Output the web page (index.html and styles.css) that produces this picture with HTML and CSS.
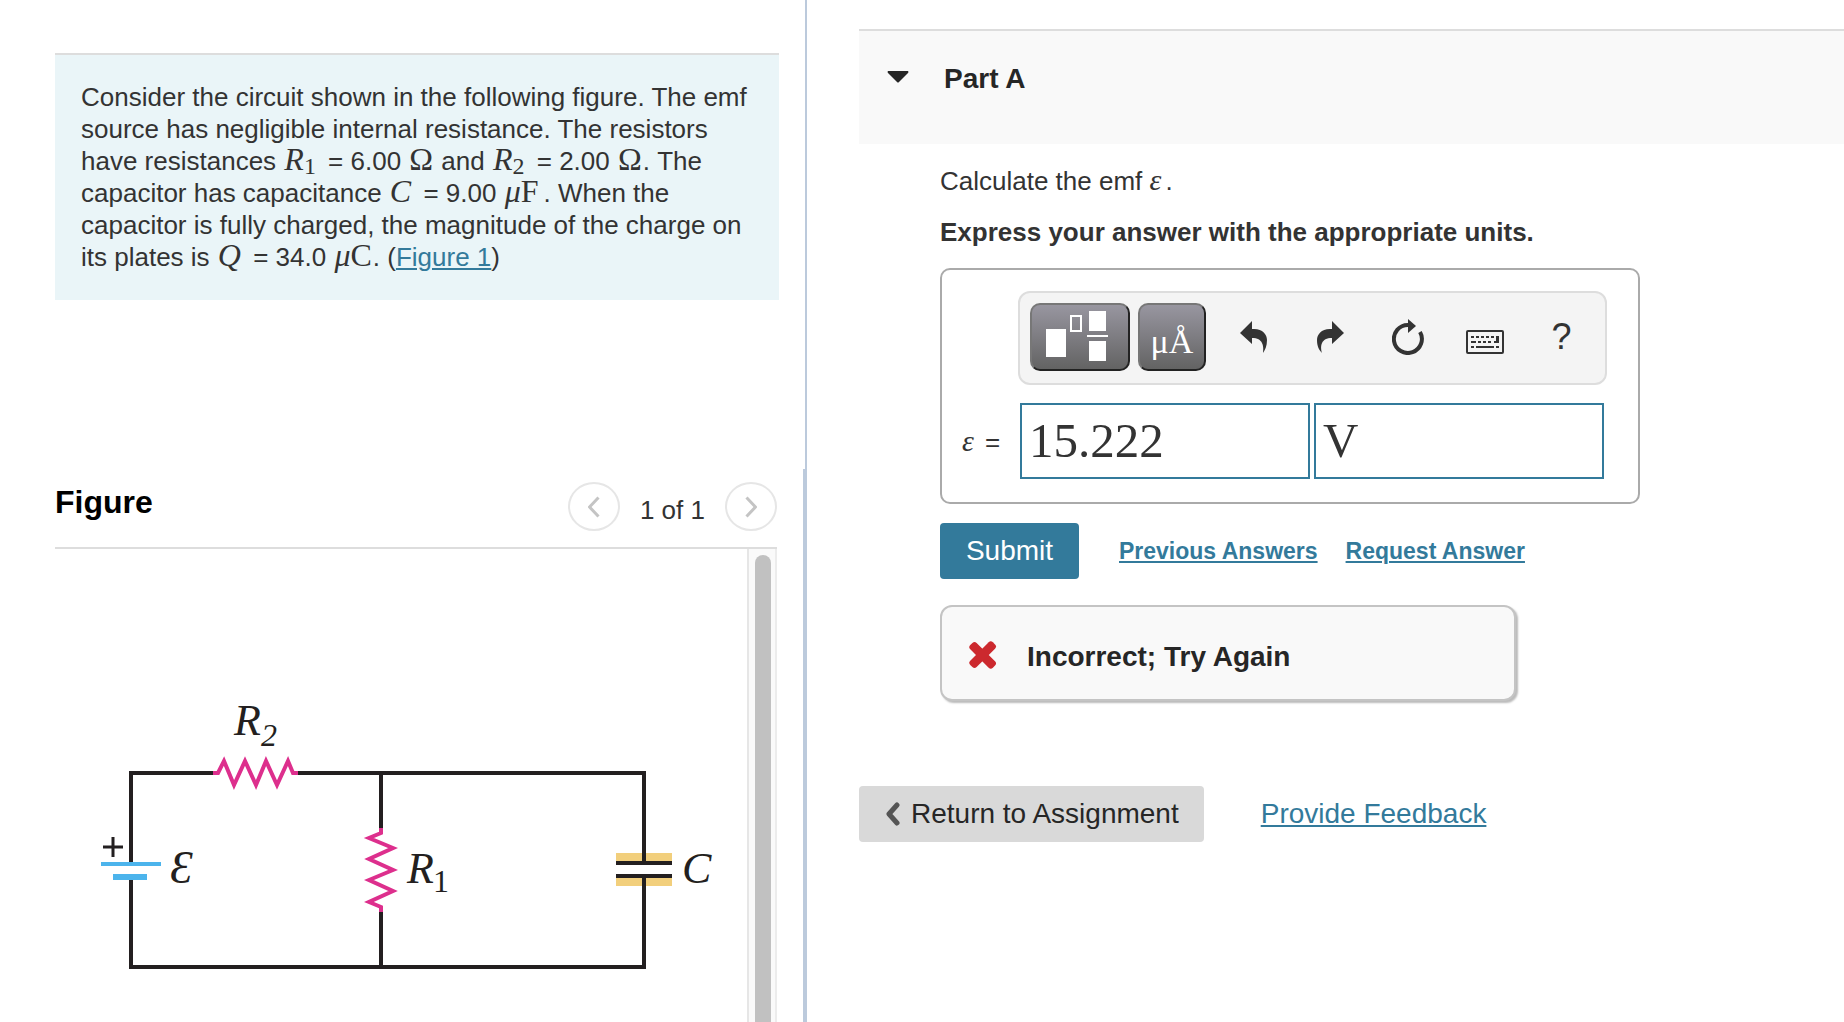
FILE: index.html
```html
<!DOCTYPE html>
<html lang="en">
<head>
  <meta charset="UTF-8">
  <meta name="viewport" content="width=device-width, initial-scale=1.0">
  <title>Part A</title>
  <link rel="stylesheet" href="styles.css">
</head>
<body>
  <div class="page">
    <aside class="left">
      <section class="intro">
        <p class="problem">
          Consider the circuit shown in the following figure. The emf<br>
          source has negligible internal resistance. The resistors<br>
          have resistances <span class="math var"><i>R</i><sub>1</sub></span> = 6.00 <span class="math">Ω</span> and <span class="math var"><i>R</i><sub>2</sub></span> = 2.00 <span class="math">Ω</span>. The<br>
          capacitor has capacitance <span class="math var"><i>C</i></span> = 9.00 <span class="math unit"><i>μ</i>F</span>. When the<br>
          capacitor is fully charged, the magnitude of the charge on<br>
          its plates is <span class="math var"><i>Q</i></span> = 34.0 <span class="math"><i>μ</i>C</span>. (<a href="#figure">Figure 1</a>)
        </p>
      </section>

      <section class="figure" id="figure">
        <header class="figure-head">
          <h2>Figure</h2>
          <div class="pager">
            <button class="round" type="button" aria-label="Previous figure">
              <svg width="12" height="22" viewBox="0 0 12 22"><path d="M10.500 1.500 L1.500 11 L10.500 20.500"/></svg>
            </button>
            <span>1 of 1</span>
            <button class="round" type="button" aria-label="Next figure">
              <svg width="12" height="22" viewBox="0 0 12 22"><path d="M1.500 1.500 L10.500 11 L1.500 20.500"/></svg>
            </button>
          </div>
        </header>
        <div class="figure-body">
          <svg class="circuit" width="692" height="473" viewBox="55 549 692 473" role="img" aria-label="Circuit diagram">
            <!-- capacitor plates -->
            <path class="charge" d="M616 853h56v8h-56zM616 878h56v8h-56z"/>
            <!-- wires -->
            <path class="wire" d="M131 862V773H215M297 773H644V862M131 879V967H644V877M381 773V829M381 911V967"/>
            <path class="wire plate" d="M616 863h56M616 876h56"/>
            <!-- resistors -->
            <path class="resistor" d="M213 773h5l6-12 10 24 11-24 11 24 10-24 11 24 11-24 5 12h5"/>
            <path class="resistor" d="M381 828v5l-12 5 24 10-24 11 24 11-24 10 24 11-24 11 12 5v5"/>
            <!-- battery -->
            <path class="cell" d="M101 864h60"/>
            <path class="cell thick" d="M113 877h34"/>
            <path class="plus" d="M103 847h20M113 837v20"/>
            <text x="234" y="735">R</text>
            <text class="sub slanted" x="261" y="746">2</text>
            <text x="407" y="883">R</text>
            <text class="sub" x="433" y="892">1</text>
            <text x="682" y="883">C</text>
            <text class="emf" x="170" y="883">Ɛ</text>
          </svg>
          <div class="scrollbar"><div class="thumb"></div></div>
        </div>
      </section>
    </aside>

    <main class="right">
      <header class="part-head">
        <svg width="22" height="12" viewBox="0 0 22 12"><path d="M1 0h20q1 1 0 2L12 11q-1 1-2 0L1 2q-1-1 0-2z" fill="#262626"/></svg>
        <h1>Part A</h1>
      </header>

      <div class="part-body">
        <p>Calculate the emf <i class="eps">ε</i>.</p>
        <p class="bold">Express your answer with the appropriate units.</p>

        <form class="answer">
          <div class="toolbar">
            <button class="key wide" type="button" aria-label="Templates">
              <svg width="62" height="50" viewBox="0 0 62 50">
                <path d="M0 18h20v28H0zM43 0h17v20H43zM43 30h17v20H43zM41 24h21v2H41z" fill="#fff"/>
                <path d="M25 5h10v15H25z" fill="none" stroke="#fff" stroke-width="2"/>
              </svg>
            </button>
            <button class="key units" type="button">μÅ</button>
            <button class="tool" type="button" aria-label="Undo">
              <svg width="28" height="32" viewBox="0 0 28 32"><path d="M0 12L12 0V8C22 7 27 13 27 19C27 25 25 29 23 32C24 25 23 17 12 17V23Z"/></svg>
            </button>
            <button class="tool" type="button" aria-label="Redo">
              <svg width="28" height="32" viewBox="0 0 28 32"><path d="M27 12L15 0V8C5 7 0 13 0 19C0 25 2 29 5 32C3 25 4 17 15 17V23Z"/></svg>
            </button>
            <button class="tool" type="button" aria-label="Reset">
              <svg width="32" height="36" viewBox="0 0 32 36">
                <path d="M16 6A14 14 0 1 0 28 13" fill="none" stroke="#333" stroke-width="4"/>
                <path d="M16 0V14L24 7Z"/>
              </svg>
            </button>
            <button class="tool low" type="button" aria-label="Keyboard shortcuts">
              <svg width="38" height="24" viewBox="0 0 38 24">
                <rect x="1" y="1" width="36" height="22" rx="1" fill="none" stroke="#333" stroke-width="2"/>
                <path d="M5 6h3v2H5zM10 6h3v2h-3zM15 6h3v2h-3zM20 6h3v2h-3zM25 6h3v2h-3zM30 6h3v7h-5v-2h2zM5 11h5v2H5zM12 11h3v2h-3zM17 11h3v2h-3zM22 11h3v2h-3zM5 16h3v2H5zM10 16h18v2H10zM30 16h3v2h-3z"/>
              </svg>
            </button>
            <button class="tool help" type="button" aria-label="Help">?</button>
          </div>
          <div class="entry">
            <label for="value"><i class="eps">ε</i> =</label>
            <input id="value" type="text" value="15.222">
            <input id="unit" type="text" value="V" aria-label="Units">
          </div>
        </form>

        <div class="actions">
          <button class="submit" type="button">Submit</button>
          <a href="#">Previous Answers</a>
          <a href="#">Request Answer</a>
        </div>

        <div class="feedback">
          <svg width="28" height="28" viewBox="0 0 28 28" fill="#cc292e">
            <rect x="-2" y="10" width="32" height="9" rx="3" transform="rotate(45 14 14)"/>
            <rect x="-2" y="9" width="32" height="9" rx="3" transform="rotate(-45 14 14)"/>
          </svg>
          <span>Incorrect; Try Again</span>
        </div>
      </div>

      <footer class="bottom">
        <button class="return" type="button">
          <svg width="16" height="24" viewBox="0 0 16 24"><path d="M12 3L4 12L12 21" fill="none" stroke="#555" stroke-width="5" stroke-linecap="round" stroke-linejoin="round"/></svg>
          Return to Assignment
        </button>
        <a href="#">Provide Feedback</a>
      </footer>
    </main>
  </div>
</body>
</html>
```

FILE: styles.css
```css
* {
  box-sizing: border-box;
}

body {
  margin: 0;
  font-family: "Liberation Sans", Arial, sans-serif;
  font-size: 26px;
  line-height: 32px;
  color: #333;
  background-color: #fff;
}

h1, h2, p {
  margin: 0;
}

button {
  font-family: inherit;
  border: none;
  padding: 0;
  cursor: pointer;
}

a {
  color: #337a9b;
  text-decoration-thickness: 2px;
  text-underline-offset: 2px;
}

.page {
  display: grid;
  grid-template-columns: 807fr 1037fr;
  height: 100vh;
  overflow: hidden;
}

/* left side */

.left {
  display: flex;
  flex-direction: column;
  min-height: 0;
}

.intro {
  min-height: 469px;
  padding: 53px 26px 0 55px;
  border-right: 2px solid #bccadc;
}

.problem {
  padding: 26px 20px 27px 26px;
  border-top: 2px solid #ddd;
  background-color: #eaf5f8;
  white-space: nowrap;
}

.math {
  margin: 0 1px;
  font-family: "Liberation Serif", "Times New Roman", serif;
  font-size: 32px;
  line-height: 0;
}

.var {
  margin-right: 5px;
}

.unit {
  margin-right: 5px;
}

.math sub {
  font-size: 24px;
  line-height: 0;
  vertical-align: -4px;
}

.figure {
  flex: 1;
  min-height: 0;
  display: flex;
  flex-direction: column;
  padding: 0 26px 0 55px;
  border-right: 4px solid #bccadc;
}

.figure-head {
  display: flex;
  justify-content: space-between;
  height: 80px;
  padding-top: 13px;
  border-bottom: 2px solid #ddd;
}

h2 {
  font-size: 32px;
  line-height: 40px;
  color: #000;
}

.pager {
  display: flex;
  align-items: flex-start;
  gap: 20px;
}

.pager span {
  padding-top: 12px;
}

.round {
  display: flex;
  align-items: center;
  justify-content: center;
  width: 52px;
  height: 49px;
  border: 2px solid #e6e6e6;
  border-radius: 50%;
  background-color: #fff;
}

.round path {
  fill: none;
  stroke: #c4c4c4;
  stroke-width: 3;
}

.figure-body {
  flex: 1;
  min-height: 0;
  display: flex;
  justify-content: space-between;
  overflow: hidden;
}

.scrollbar {
  width: 30px;
  padding: 6px 4px 0 6px;
  border-left: 2px solid #e6e6e6;
  border-right: 2px solid #ececec;
  background-color: #fafafa;
}

.thumb {
  width: 16px;
  height: 100%;
  border-radius: 8px 8px 0 0;
  background-color: #c1c1c1;
}

.circuit text {
  font-family: "Liberation Serif", "Times New Roman", serif;
  font-style: italic;
  font-size: 44px;
  fill: #231f20;
}

.circuit .sub {
  font-size: 32px;
  font-style: normal;
}

.circuit .slanted {
  font-style: italic;
}

.circuit .emf {
  font-size: 46px;
}

.circuit path {
  fill: none;
}

.circuit .wire {
  stroke: #231f20;
  stroke-width: 4;
  stroke-linecap: square;
}

.circuit .plate {
  stroke-linecap: butt;
}

.circuit .charge {
  fill: #f2cf7c;
}

.circuit .resistor {
  stroke: #dd2f8d;
  stroke-width: 4;
}

.circuit .cell {
  stroke: #4cb4ec;
  stroke-width: 4;
}

.circuit .thick {
  stroke-width: 6;
}

.circuit .plus {
  stroke: #231f20;
  stroke-width: 3;
}

/* right side */

.right {
  padding: 29px 0 0 52px;
}

.part-head {
  display: flex;
  align-items: flex-start;
  gap: 35px;
  height: 115px;
  padding: 32px 28px;
  border-top: 2px solid #ddd;
  background-color: #f9f9f9;
}

.part-head svg {
  margin-top: 8px;
}

h1 {
  font-size: 28px;
  line-height: 32px;
  color: #262626;
}

.part-body {
  padding: 21px 0 0 81px;
}

.part-body p {
  margin-bottom: 19px;
}

.part-body .bold {
  font-weight: bold;
  margin-bottom: 20px;
}

.eps {
  margin-right: 4px;
  font-family: "Liberation Serif", "Times New Roman", serif;
  font-size: 30px;
  line-height: 0;
}

.answer {
  max-width: 700px;
  height: 236px;
  padding: 21px 31px 0 20px;
  border: 2px solid #aaa;
  border-radius: 10px;
}

.toolbar {
  display: flex;
  align-items: center;
  height: 94px;
  margin-left: 56px;
  padding: 0 5px 2px 10px;
  border: 2px solid #ddd;
  border-radius: 12px;
  background-color: #f4f4f4;
}

.key {
  display: flex;
  align-items: center;
  justify-content: center;
  width: 68px;
  height: 68px;
  margin-right: 8px;
  border: 2px solid;
  border-color: #777 #222 #222 #777;
  border-radius: 10px;
  background-image: linear-gradient(#9896a0, #636363);
  color: #fff;
}

.wide {
  width: 100px;
  padding: 0 6px 2px 0;
}

.units {
  margin-right: 10px;
  padding-top: 10px;
  font-family: "Liberation Serif", "Times New Roman", serif;
  font-size: 34px;
}

.tool {
  flex: 1;
  display: flex;
  align-items: center;
  justify-content: center;
  height: 68px;
  background: none;
  color: #333;
}

.tool svg {
  fill: #333;
}

.low {
  padding-top: 9px;
}

.help {
  font-size: 36px;
}

.entry {
  display: flex;
  align-items: center;
  gap: 4px;
  margin-top: 18px;
}

.entry label {
  width: 54px;
  padding-top: 2px;
  white-space: nowrap;
}

.entry input {
  width: 290px;
  height: 76px;
  min-width: 0;
  padding: 0 7px 1px;
  border: 2px solid #337a9b;
  border-radius: 0;
  font-family: "Liberation Serif", "Times New Roman", serif;
  font-size: 49px;
  color: #333;
  background-color: #fff;
}

.actions {
  display: flex;
  align-items: center;
  gap: 28px;
  margin-top: 19px;
  font-size: 23px;
  font-weight: bold;
}

.submit {
  width: 139px;
  height: 56px;
  margin-right: 12px;
  border-radius: 4px;
  background-color: #337a9b;
  color: #fff;
  font-size: 28px;
}

.feedback {
  display: flex;
  align-items: center;
  gap: 30px;
  max-width: 576px;
  height: 96px;
  margin-top: 26px;
  padding: 4px 27px 0;
  border: 2px solid #c4c4c4;
  border-radius: 12px;
  box-shadow: 2px 2px 2px #bbb;
  background-color: #f9f9f9;
  font-size: 28px;
  font-weight: bold;
  color: #262626;
}

.feedback span {
  padding-top: 3px;
}

.bottom {
  display: flex;
  align-items: center;
  gap: 57px;
  margin-top: 85px;
  font-size: 28px;
}

.return {
  display: flex;
  align-items: center;
  gap: 10px;
  height: 56px;
  padding: 0 25px 0 26px;
  border-radius: 4px;
  background-color: #d9d9d9;
  color: #262626;
  font-size: 28px;
}
```
